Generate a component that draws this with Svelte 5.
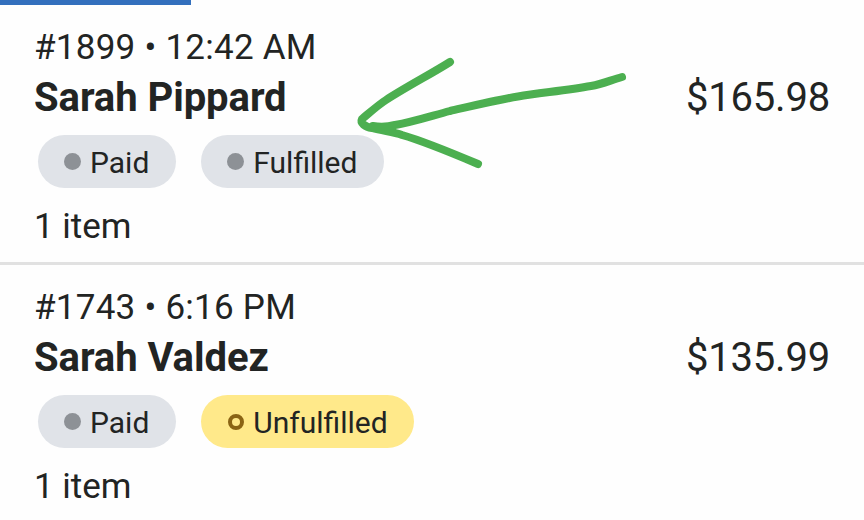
<script lang="ts">
	type Badge = { label: string; tone: "neutral" | "warning" };
	type Order = {
		number: string;
		time: string;
		customer: string;
		total: string;
		items: string;
		badges: Badge[];
	};

	const orders: Order[] = [
		{
			number: "#1899",
			time: "12:42 AM",
			customer: "Sarah Pippard",
			total: "$165.98",
			items: "1 item",
			badges: [
				{ label: "Paid", tone: "neutral" },
				{ label: "Fulfilled", tone: "neutral" },
			],
		},
		{
			number: "#1743",
			time: "6:16 PM",
			customer: "Sarah Valdez",
			total: "$135.99",
			items: "1 item",
			badges: [
				{ label: "Paid", tone: "neutral" },
				{ label: "Unfulfilled", tone: "warning" },
			],
		},
	];
</script>

<main class="screen">
	<div class="tab-track"><div class="tab-indicator"></div></div>

	{#each orders as order (order.number)}
		<article class="order">
			<div class="meta">{order.number} • {order.time}</div>
			<div class="summary">
				<span class="customer">{order.customer}</span>
				<span class="total">{order.total}</span>
			</div>
			<div class="badges">
				{#each order.badges as badge}
					<span class="badge {badge.tone}">
						<span class="pip"></span>
						<span class="label">{badge.label}</span>
					</span>
				{/each}
			</div>
			<div class="items">{order.items}</div>
		</article>
	{/each}

	<svg class="arrow" viewBox="0 0 300 140" width="300" height="140" aria-hidden="true">
		<path d="M110 22C91 34 66 47 46 60C38 65 27 75 22 79C20 83 25 87 32 88C43 91 53 92 62 95C83 101 112 113 138 124" />
		<path d="M282 37C271 40 263 44 251 46C228 50 200 53 178 56.500C157 60 132 66 110 71C91 76 73 82 55 85C47 87 40 87 33 86" />
	</svg>
</main>

<style>
	:global(body) {
		margin: 0;
		background: #fefefe;
	}

	.screen {
		position: relative;
		height: 520px;
		overflow: hidden;
		background: #fefefe;
		color: #222423;
		font-family: Roboto, "Liberation Sans", sans-serif;
	}

	.tab-track {
		height: 5px;
	}

	.tab-indicator {
		width: 191px;
		height: 5px;
		background: #3370bd;
	}

	.order {
		box-sizing: border-box;
		height: 260px;
		padding: 23px 34px 0;
		border-bottom: 3px solid #e1e1e1;
	}

	.meta,
	.items {
		font-size: 35px;
		line-height: 40px;
	}

	.meta {
		letter-spacing: 0.25px;
	}

	.summary {
		display: flex;
		justify-content: space-between;
		margin-top: 6px;
		font-size: 40px;
		line-height: 48px;
	}

	.customer {
		font-weight: 700;
		letter-spacing: -0.06px;
	}

	.total {
		letter-spacing: -0.2px;
	}

	.badges {
		display: flex;
		gap: 25px;
		margin: 13px 0 19px 3.5px;
	}

	.badge {
		display: flex;
		align-items: center;
		box-sizing: border-box;
		height: 53px;
		padding: 0 26.5px;
		border-radius: 27px;
		background: #e0e3e8;
		font-size: 30px;
	}

	.label {
		padding-top: 1px;
	}

	.pip {
		box-sizing: border-box;
		width: 17px;
		height: 17px;
		margin-right: 9px;
		border-radius: 50%;
		background: #8d9196;
	}

	.warning {
		background: #ffe98a;
	}

	.warning .pip {
		width: 16px;
		height: 16px;
		margin: 0 9.5px 0 0.5px;
		border: 4px solid #8a6414;
		background: none;
	}

	.arrow {
		position: absolute;
		top: 40px;
		left: 340px;
		fill: none;
		stroke: #4caf50;
		stroke-width: 8;
		stroke-linecap: round;
		stroke-linejoin: round;
	}
</style>
